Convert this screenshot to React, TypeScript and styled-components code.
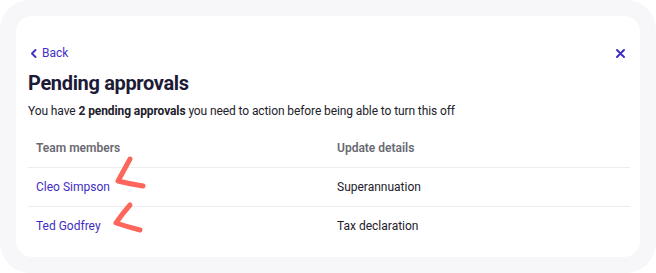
import React from 'react';
import styled, { createGlobalStyle } from 'styled-components';

const GlobalStyle = createGlobalStyle`
    html, body {
        margin: 0;
        padding: 0;
        background: #ffffff;
    }
    body {
        font-family: Roboto, "Liberation Sans", sans-serif;
        -webkit-font-smoothing: antialiased;
    }
`;

interface Approval {
    name: string;
    detail: string;
}

const approvals: Approval[] = [
    { name: 'Cleo Simpson', detail: 'Superannuation' },
    { name: 'Ted Godfrey', detail: 'Tax declaration' },
];

// hand drawn annotation marks next to the names
const marks = [
    'M130 159 Q124 170 118 181 Q130 184 143 186',
    'M130 205 Q122 214 116 223 Q128 227 140 230',
];

const App: React.FC = () => {
    return (
        <>
            <GlobalStyle />
            <Frame>
                <Card>
                    <TopBar>
                        <BackLink>
                            <svg width="8" height="9" viewBox="0 0 8 9">
                                <path
                                    d="M5.5 1 L2 4.5 L5.5 8"
                                    fill="none"
                                    stroke="currentColor"
                                    strokeWidth="1.9"
                                    strokeLinecap="round"
                                    strokeLinejoin="round"
                                />
                            </svg>
                            Back
                        </BackLink>
                        <CloseButton aria-label="Close">
                            <svg width="9" height="9" viewBox="0 0 9 9">
                                <path
                                    d="M1 1 L8 8 M8 1 L1 8"
                                    fill="none"
                                    stroke="currentColor"
                                    strokeWidth="1.9"
                                    strokeLinecap="round"
                                />
                            </svg>
                        </CloseButton>
                    </TopBar>
                    <Heading>Pending approvals</Heading>
                    <Intro>
                        You have <strong>2 pending approvals</strong> you need to action before
                        being able to turn this off
                    </Intro>
                    <Table>
                        <HeadRow>
                            <HeadCell>Team members</HeadCell>
                            <HeadCell>Update details</HeadCell>
                        </HeadRow>
                        {approvals.map(a => (
                            <Row key={a.name}>
                                <NameCell>{a.name}</NameCell>
                                <DetailCell>{a.detail}</DetailCell>
                            </Row>
                        ))}
                    </Table>
                </Card>
                <Marks width="656" height="273" viewBox="0 0 656 273">
                    {marks.map(d => (
                        <path
                            key={d}
                            d={d}
                            fill="none"
                            stroke="#fd665a"
                            strokeWidth="5"
                            strokeLinecap="round"
                            strokeLinejoin="round"
                        />
                    ))}
                </Marks>
            </Frame>
        </>
    );
};

// STYLES //
const Frame = styled.div`
    position: relative;
    width: 656px;
    height: 273px;
    box-sizing: border-box;
    padding: 16px;
    background: #f7f7fa;
    border-radius: 30px;
`;

const Card = styled.div`
    height: 241px;
    box-sizing: border-box;
    padding: 29px 10px 0 12px;
    background: #ffffff;
    border-radius: 16px;
    display: flex;
    flex-direction: column;
`;

const TopBar = styled.div`
    display: flex;
    align-items: center;
    justify-content: space-between;
    height: 16px;
`;

const BackLink = styled.a`
    display: flex;
    align-items: center;
    gap: 4px;
    padding-left: 2px;
    font-size: 12px;
    color: #4431c9;
    cursor: pointer;
`;

const CloseButton = styled.button`
    display: flex;
    align-items: center;
    justify-content: center;
    padding: 0;
    margin-right: 5px;
    border: none;
    background: none;
    color: #3c2bc4;
    cursor: pointer;
`;

const Heading = styled.h1`
    margin: 9px 0 0;
    font-size: 20px;
    line-height: 26px;
    font-weight: 700;
    letter-spacing: -0.35px;
    color: #1d1a38;
`;

const Intro = styled.p`
    margin: 6px 0 0;
    font-size: 12px;
    line-height: 18px;
    letter-spacing: -0.1px;
    color: #22212b;

    strong {
        font-weight: 700;
    }
`;

const Table = styled.div`
    margin-top: 9px;
    display: flex;
    flex-direction: column;
`;

const Row = styled.div`
    display: grid;
    grid-template-columns: 301px 1fr;
    align-items: center;
    height: 38px;
    border-top: 1px solid #ededf1;
    font-size: 12px;
`;

const HeadRow = styled(Row)`
    border-top: none;
`;

const HeadCell = styled.div`
    padding-left: 8px;
    font-weight: 600;
    color: #696971;
`;

const NameCell = styled.div`
    padding-left: 8px;
    color: #3f2dc2;
`;

const DetailCell = styled.div`
    padding-left: 8px;
    color: #22212b;
`;

const Marks = styled.svg`
    position: absolute;
    top: 0;
    left: 0;
    pointer-events: none;
`;

export default App;
